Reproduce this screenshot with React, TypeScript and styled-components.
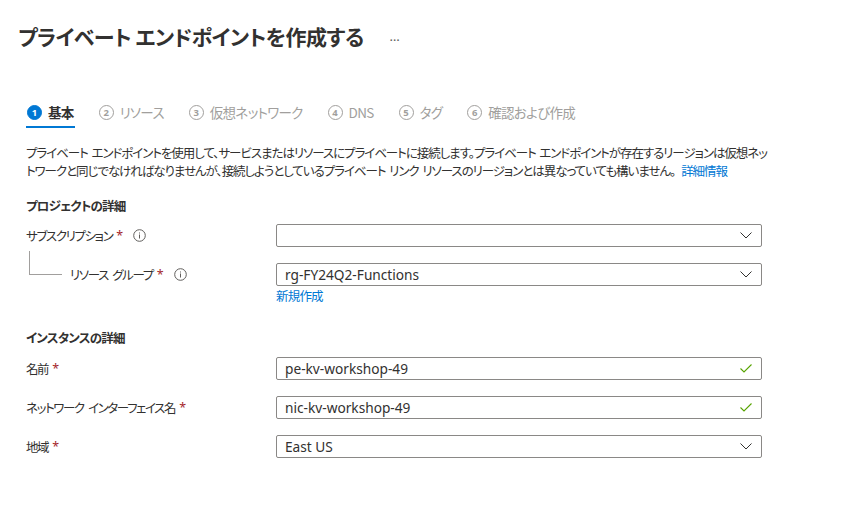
import React from "react";
import styled, { createGlobalStyle } from "styled-components";

const Global = createGlobalStyle`
  html, body { margin: 0; padding: 0; background: #ffffff; }
  body {
    font-family: "Noto Sans", "Noto Sans CJK JP", sans-serif;
    font-feature-settings: "palt";
    color: #323130;
  }
`;

const Page = styled.div`
  width: 850px;
  height: 527px;
  overflow: hidden;
  background: #fff;
`;

const Header = styled.div`
  display: flex;
  align-items: center;
  padding: 19px 0 0 18px;
  height: 34px;
`;

const Title = styled.h1`
  margin: 0;
  font-family: "Noto Sans CJK JP", sans-serif;
  font-size: 21px;
  font-weight: 600;
  color: #323130;
  letter-spacing: -0.5px;
`;

const More = styled.span`
  margin-left: 26px;
  font-size: 13px;
  color: #605e5c;
  letter-spacing: 1px;
`;

const Content = styled.div`
  padding: 45px 0 0 26px;
`;

const Tabs = styled.div`
  display: flex;
  gap: 23px;
  height: 30px;
`;

const Tab = styled.div<{ $active?: boolean }>`
  display: flex;
  align-items: center;
  gap: 6px;
  height: 28px;
  padding: 0 1px;
  border-bottom: 2px solid ${(p) => (p.$active ? "#0078d4" : "transparent")};
  font-family: "Noto Sans CJK JP", sans-serif;
  font-size: 13.5px;
  letter-spacing: -0.7px;
  font-weight: ${(p) => (p.$active ? 700 : 400)};
  color: ${(p) => (p.$active ? "#323130" : "#a19f9d")};
`;

const StepNum = styled.span<{ $active?: boolean }>`
  display: inline-flex;
  align-items: center;
  justify-content: center;
  box-sizing: border-box;
  width: 15px;
  height: 15px;
  border-radius: 50%;
  font-size: 9.5px;
  letter-spacing: 0;
  font-weight: 700;
  font-family: "Noto Sans", sans-serif;
  background: ${(p) => (p.$active ? "#0078d4" : "transparent")};
  border: 1px solid ${(p) => (p.$active ? "#0078d4" : "#a19f9d")};
  color: ${(p) => (p.$active ? "#fff" : "#a19f9d")};
`;

const Description = styled.p`
  margin: 16px 0 0 0;
  font-family: "Noto Sans CJK JP", sans-serif;
  font-size: 12.5px;
  letter-spacing: -1.05px;
  word-spacing: 2px;
  line-height: 18px;
  color: #323130;
  white-space: nowrap;
`;

const Link = styled.a`
  color: #0078d4;
  text-decoration: none;
  margin-left: 6px;
`;

const SectionTitle = styled.h2<{ $top: number }>`
  margin: ${(p) => p.$top}px 0 0 0;
  font-family: "Noto Sans CJK JP", sans-serif;
  font-size: 12.5px;
  letter-spacing: -0.8px;
  font-weight: 700;
  line-height: 18px;
  color: #323130;
`;

const Row = styled.div<{ $top: number }>`
  display: grid;
  grid-template-columns: 250px 486px;
  align-items: center;
  margin-top: ${(p) => p.$top}px;
`;

const LabelCell = styled.div`
  display: flex;
  align-items: center;
  font-family: "Noto Sans CJK JP", sans-serif;
  font-size: 12.5px;
  letter-spacing: -1.4px;
  word-spacing: 3px;
  white-space: pre;
  color: #323130;
`;

const Connector = styled.span`
  box-sizing: border-box;
  width: 33px;
  height: 24px;
  margin: -24px 8px 0 3px;
  border-left: 1px solid #a19f9d;
  border-bottom: 1px solid #a19f9d;
`;

const Star = styled.span`
  color: #a4262c;
  margin-left: 4px;
  letter-spacing: 0;
  font-family: "Noto Sans", sans-serif;
`;

const InfoWrap = styled.span`
  display: inline-flex;
  margin-left: 10px;
`;

const Field = styled.div`
  box-sizing: border-box;
  height: 23px;
  border: 1px solid #8a8886;
  border-radius: 2px;
  display: flex;
  align-items: center;
  justify-content: space-between;
  padding: 0 9px 0 8px;
  font-family: "Noto Sans", "Noto Sans CJK JP", sans-serif;
  font-size: 13.7px;
  color: #323130;
`;

const FieldLink = styled.a`
  display: block;
  margin-top: 2px;
  font-family: "Noto Sans CJK JP", sans-serif;
  font-size: 12.5px;
  letter-spacing: -0.8px;
  line-height: 16px;
  color: #0078d4;
  text-decoration: none;
`;

const Info = () => (
  <svg width="13" height="13" viewBox="0 0 13 13">
    <circle cx="6.5" cy="6.5" r="5.8" fill="none" stroke="#605e5c" strokeWidth="1" />
    <rect x="6" y="5.5" width="1" height="4" fill="#605e5c" />
    <rect x="6" y="3.5" width="1" height="1" fill="#605e5c" />
  </svg>
);

const Chevron = () => (
  <svg width="12" height="7" viewBox="0 0 12 7">
    <path d="M0.5 0.5 L6 6 L11.5 0.5" fill="none" stroke="#323130" strokeWidth="1" />
  </svg>
);

const Check = () => (
  <svg width="12" height="9" viewBox="0 0 12 9">
    <path d="M0.5 4.5 L4 8 L11.5 0.5" fill="none" stroke="#57a300" strokeWidth="1.1" />
  </svg>
);

const tabs = [
  { n: 1, label: "基本", active: true },
  { n: 2, label: "リソース" },
  { n: 3, label: "仮想ネットワーク" },
  { n: 4, label: "DNS" },
  { n: 5, label: "タグ" },
  { n: 6, label: "確認および作成" },
];

export default function App() {
  return (
    <Page>
      <Global />
      <Header>
        <Title>プライベート エンドポイントを作成する</Title>
        <More>…</More>
      </Header>
      <Content>
        <Tabs>
          {tabs.map((t) => (
            <Tab key={t.n} $active={t.active}>
              <StepNum $active={t.active}>{t.n}</StepNum>
              {t.label}
            </Tab>
          ))}
        </Tabs>
        <Description>
          プライベート エンドポイントを使用して、サービスまたはリソースにプライベートに接続します。プライベート エンドポイントが存在するリージョンは仮想ネッ
          <br />
          トワークと同じでなければなりませんが、接続しようとしているプライベート リンク リソースのリージョンとは異なっていても構いません。
          <Link href="#">詳細情報</Link>
        </Description>

        <SectionTitle $top={17}>プロジェクトの詳細</SectionTitle>
        <Row $top={9}>
          <LabelCell>
            サブスクリプション<Star>*</Star>
            <InfoWrap><Info /></InfoWrap>
          </LabelCell>
          <Field>
            <span />
            <Chevron />
          </Field>
        </Row>
        <Row $top={16}>
          <LabelCell>
            <Connector />
            {"リソース グループ"}<Star>*</Star>
            <InfoWrap><Info /></InfoWrap>
          </LabelCell>
          <Field>
            <span>rg-FY24Q2-Functions</span>
            <Chevron />
          </Field>
        </Row>
        <Row $top={0}>
          <span />
          <FieldLink href="#">新規作成</FieldLink>
        </Row>

        <SectionTitle $top={25}>インスタンスの詳細</SectionTitle>
        <Row $top={10}>
          <LabelCell>
            名前<Star>*</Star>
          </LabelCell>
          <Field>
            <span>pe-kv-workshop-49</span>
            <Check />
          </Field>
        </Row>
        <Row $top={16}>
          <LabelCell>
            {"ネットワーク インターフェイス名"}<Star>*</Star>
          </LabelCell>
          <Field>
            <span>nic-kv-workshop-49</span>
            <Check />
          </Field>
        </Row>
        <Row $top={16}>
          <LabelCell>
            地域<Star>*</Star>
          </LabelCell>
          <Field>
            <span>East US</span>
            <Chevron />
          </Field>
        </Row>
      </Content>
    </Page>
  );
}
